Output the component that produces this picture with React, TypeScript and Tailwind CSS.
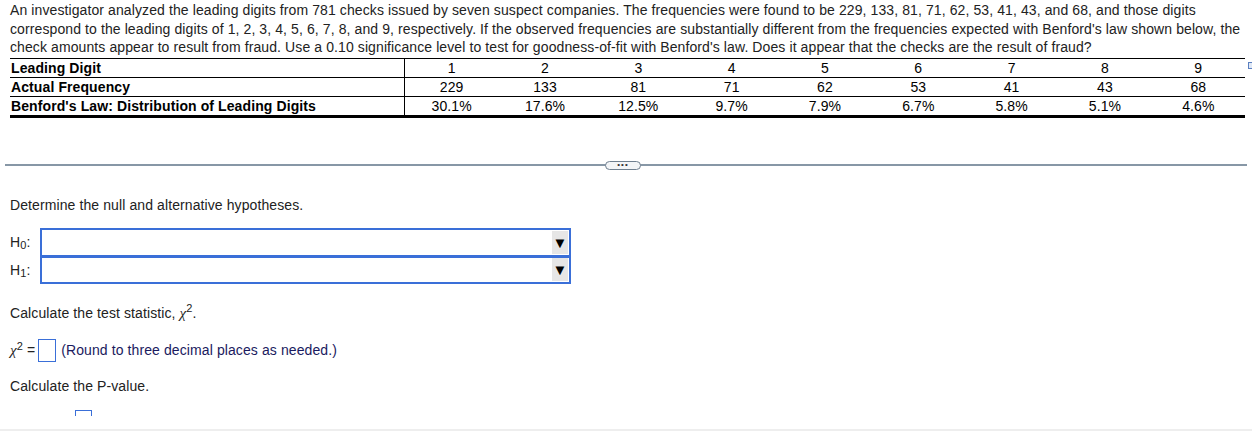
import React from "react";

const digits = ["1", "2", "3", "4", "5", "6", "7", "8", "9"];
const freq = ["229", "133", "81", "71", "62", "53", "41", "43", "68"];
const benford = ["30.1%", "17.6%", "12.5%", "9.7%", "7.9%", "6.7%", "5.8%", "5.1%", "4.6%"];

function Row({ label, values, last }: { label: string; values: string[]; last?: boolean }) {
  return (
    <div className={`flex ${last ? "h-[21px] border-b-[3px]" : "h-[19px] border-b"} items-center border-black`}>
      <div className="w-[395px] shrink-0 h-full border-r border-black pl-[1px] font-bold leading-[18px]">{label}</div>
      {values.map((v, i) => (
        <div key={i} className="flex-1 text-center leading-[18px]">
          {v}
        </div>
      ))}
    </div>
  );
}

function Dropdown({ top }: { top?: boolean }) {
  return (
    <div
      className={`flex h-[29px] w-[531px] items-center justify-end border-2 border-[#3a6fd8] ${top ? "" : "-mt-[2px] border-t-[3px]"} pr-[1px]`}
    >
      <div className="flex h-[23px] w-[16px] items-center justify-center bg-[#e6e6e6] text-[15px] leading-none text-black">
        ▼
      </div>
    </div>
  );
}

export default function App() {
  return (
    <div className="relative h-[431px] w-[1252px] overflow-hidden bg-white text-[14px] tracking-[0.1px] text-[#222] [font-family:'Liberation_Sans',Arial,sans-serif]">
      <div className="px-[10px] pt-[1px] leading-[18.5px]">
        <p>
          An investigator analyzed the leading digits from 781 checks issued by seven suspect companies. The frequencies were found to be 229, 133, 81, 71, 62, 53, 41, 43, and 68, and those digits correspond to the leading digits of 1, 2, 3, 4, 5, 6, 7, 8, and 9, respectively. If the observed frequencies are substantially different from the frequencies expected with Benford's law shown below, the check amounts appear to result from fraud. Use a 0.10 significance level to test for goodness-of-fit with Benford's law. Does it appear that the checks are the result of fraud?
        </p>
      </div>
      <div className="relative ml-[10px] mt-[1px] w-[1235px] border-t border-black text-black">
        <Row label="Leading Digit" values={digits} />
        <Row label="Actual Frequency" values={freq} />
        <Row label="Benford's Law: Distribution of Leading Digits" values={benford} last />
        <div className="absolute -right-[10px] top-[3px] h-[7px] w-[7px] border border-[#5a7fc0] bg-[#dfe8f6]" />
      </div>

      <div className="relative mx-[5px] mt-[46px] h-0 border-t-2 border-[#8797a6]">
        <div className="absolute left-[600px] -top-[5px] flex h-[9px] w-[36px] items-center justify-center rounded-full border border-[#6f7f8f] bg-[#f3f5f7] text-[8px] leading-none tracking-[1px] text-[#333]">
          •••
        </div>
      </div>

      <div className="px-[10px]">
        <p className="mt-[30px] leading-[18px]">Determine the null and alternative hypotheses.</p>
        <div className="mt-[14px] flex flex-col">
          <div className="flex items-center">
            <span className="w-[30px]">
              H<sub className="text-[11px]">0</sub>:
            </span>
            <Dropdown top />
          </div>
          <div className="flex items-center">
            <span className="w-[30px]">
              H<sub className="text-[11px]">1</sub>:
            </span>
            <Dropdown />
          </div>
        </div>
        <p className="mt-[20px] leading-[18px]">
          Calculate the test statistic, <i className="[font-family:'Liberation_Serif',serif] text-[15px]">χ</i>
          <sup className="text-[11px]">2</sup>.
        </p>
        <div className="mt-[17px] flex items-center leading-[18px]">
          <span>
            <i className="[font-family:'Liberation_Serif',serif] text-[15px]">χ</i>
            <sup className="text-[11px]">2</sup> =
          </span>
          <span className="ml-[3px] inline-block h-[23px] w-[18px] border border-[#3a6fd8]" />
          <span className="ml-[5px] text-[#1a1a5e]">(Round to three decimal places as needed.)</span>
        </div>
        <p className="mt-[15px] leading-[18px]">Calculate the P-value.</p>
        <div className="ml-[65px] mt-[15px] h-[6px] w-[17px] border-x border-t border-[#3a6fd8]" />
      </div>
      <div className="absolute bottom-0 left-0 h-[2px] w-full bg-[#eeeeee]" />
    </div>
  );
}
